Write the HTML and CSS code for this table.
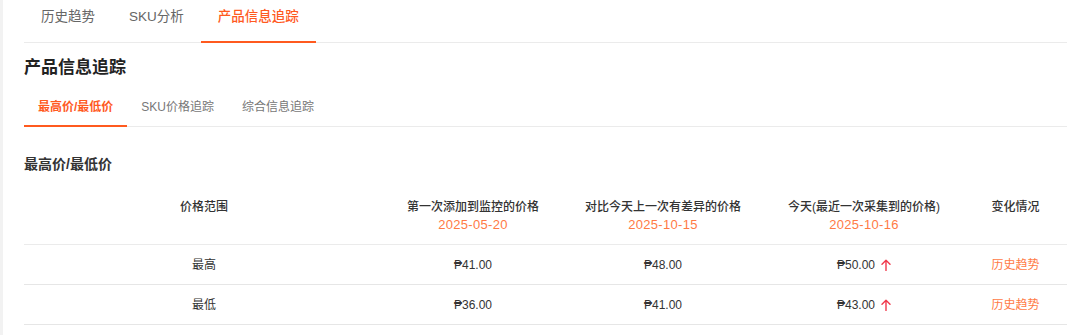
FILE: index.html
```html
<!DOCTYPE html>
<html lang="zh-CN">
<head>
<meta charset="utf-8">
<title>产品信息追踪</title>
<link rel="stylesheet" href="styles.css">
</head>
<body>
<div class="page">
  <div class="strip"></div>
  <div class="main">
    <nav class="tabs">
      <span class="tab">历史趋势</span>
      <span class="tab">SKU分析</span>
      <span class="tab active">产品信息追踪</span>
    </nav>
    <h1 class="heading">产品信息追踪</h1>
    <nav class="subtabs">
      <span class="subtab active">最高价/最低价</span>
      <span class="subtab">SKU价格追踪</span>
      <span class="subtab">综合信息追踪</span>
    </nav>
    <h2 class="section-title">最高价/最低价</h2>
    <table class="price-table">
      <colgroup>
        <col class="c1"><col class="c2"><col class="c3"><col class="c4"><col class="c5">
      </colgroup>
      <thead>
        <tr>
          <th>价格范围</th>
          <th>第一次添加到监控的价格<span class="date">2025-05-20</span></th>
          <th>对比今天上一次有差异的价格<span class="date">2025-10-15</span></th>
          <th>今天(最近一次采集到的价格)<span class="date">2025-10-16</span></th>
          <th>变化情况</th>
        </tr>
      </thead>
      <tbody>
        <tr>
          <td>最高</td>
          <td>₱41.00</td>
          <td>₱48.00</td>
          <td><span class="price-now">₱50.00<svg class="up" viewBox="0 0 10 12" width="10" height="12"><path d="M5 11.5V1.2M1 5.2L5 1.2L9 5.2" fill="none" stroke="currentColor" stroke-width="1.4" stroke-linecap="round" stroke-linejoin="round"/></svg></span></td>
          <td><span class="link">历史趋势</span></td>
        </tr>
        <tr>
          <td>最低</td>
          <td>₱36.00</td>
          <td>₱41.00</td>
          <td><span class="price-now">₱43.00<svg class="up" viewBox="0 0 10 12" width="10" height="12"><path d="M5 11.5V1.2M1 5.2L5 1.2L9 5.2" fill="none" stroke="currentColor" stroke-width="1.4" stroke-linecap="round" stroke-linejoin="round"/></svg></span></td>
          <td><span class="link">历史趋势</span></td>
        </tr>
      </tbody>
    </table>
  </div>
</div>
</body>
</html>
```

FILE: styles.css
```css
* { box-sizing: border-box; }
html, body { margin: 0; padding: 0; background: #fff; }
body {
  font-family: "Liberation Sans", "Noto Sans CJK SC", "DejaVu Sans", sans-serif;
  color: #333;
  font-size: 12px;
}
.page { display: flex; min-height: 335px; }
.strip { width: 3px; background: #f2f2f2; flex: none; }
.main { flex: 1; padding: 0 13px 0 21px; }

.tabs {
  display: flex;
  border-bottom: 1px solid #ebebeb;
  height: 43px;
}
.tab {
  position: relative;
  padding: 8px 17px 16px;
  font-size: 13.5px;
  line-height: 18px;
  color: #666;
}
.tab.active { color: #ff5a1f; font-weight: 500; }
.tab.active::after {
  content: "";
  position: absolute;
  left: 0; right: 0; bottom: -1px;
  height: 2px;
  background: #ff5a1f;
}

.heading {
  margin: 13px 0 0;
  font-size: 17px;
  line-height: 24px;
  font-weight: 600;
  color: #222;
}

.subtabs {
  display: flex;
  border-bottom: 1px solid #ebebeb;
  height: 47px;
}
.subtab {
  position: relative;
  padding: 18px 14px 10px;
  font-size: 12px;
  line-height: 18px;
  color: #777;
}
.subtab.active { color: #ff5a1f; font-weight: 700; }
.subtab.active::after {
  content: "";
  position: absolute;
  left: 0; right: 0; bottom: -1px;
  height: 2px;
  background: #ff5a1f;
}

.section-title {
  margin: 27px 0 12px;
  font-size: 14px;
  line-height: 20px;
  font-weight: 600;
  color: #333;
}

.price-table {
  width: 100%;
  border-collapse: collapse;
  table-layout: fixed;
}
.c1 { width: 360px; }
.c2 { width: 178px; }
.c3 { width: 202px; }
.c4 { width: 200px; }
.c5 { width: auto; }
.price-table th {
  font-weight: 500;
  font-size: 12px;
  line-height: 18px;
  color: #333;
  text-align: center;
  vertical-align: top;
  padding: 12px 0 10px;
  border-bottom: 1px solid #ebebeb;
}
.date {
  display: block;
  color: #ff7a45;
  font-weight: 400;
  font-size: 13px;
  letter-spacing: 0.3px;
}
.price-table td {
  text-align: center;
  font-size: 12px;
  line-height: 18px;
  color: #333;
  padding: 11px 0 10px;
  border-bottom: 1px solid #e6e6e6;
}
.price-now { display: inline-flex; align-items: center; gap: 6px; }
.up { color: #f0384b; }
.link { color: #ff7a45; }
```
